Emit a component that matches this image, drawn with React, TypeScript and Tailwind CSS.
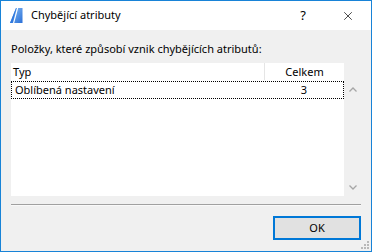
import { X } from 'lucide-react'

const font = { fontFamily: '"Noto Sans", "Open Sans", sans-serif' }

function AppIcon() {
  return (
    <svg width="13" height="16" viewBox="0 0 13 16" aria-hidden>
      <defs>
        <linearGradient id="ac" x1="0" y1="0" x2="1" y2="1">
          <stop offset="0" stopColor="#8cc0f4" />
          <stop offset="1" stopColor="#2a70d8" />
        </linearGradient>
      </defs>
      <polygon points="0,15 6,0 12.5,0 12.5,15" fill="url(#ac)" />
      <polygon points="0,15 6,0 6.5,0 2.5,15" fill="#2f78de" />
      <polygon points="3,15 7,0 8.2,0 4.2,15" fill="#ffffff" />
    </svg>
  )
}

function Chevron({ up }: { up?: boolean }) {
  return (
    <svg width="8" height="5" viewBox="0 0 8 5" aria-hidden>
      <polyline
        points={up ? '0.5,4.5 4,1 7.5,4.5' : '0.5,0.5 4,4 7.5,0.5'}
        fill="none"
        stroke="#a6a6a6"
        strokeWidth="1.3"
      />
    </svg>
  )
}

export default function App() {
  return (
    <div
      className="relative w-[372px] h-[252px] border border-[#1883d7] bg-[#f0f0f0] flex flex-col text-[11px] text-black"
      style={font}
    >
      {/* title bar */}
      <div className="h-[29px] bg-white flex items-center shrink-0">
        <div className="ml-[9px] mt-[1px]">
          <AppIcon />
        </div>
        <span className="ml-[8px] text-[11px]">Chybějící atributy</span>
        <span className="ml-auto mr-[35px] text-[13px]">?</span>
        <X className="mr-[16px]" size={14} strokeWidth={1.2} />
      </div>

      {/* body */}
      <div className="flex-1 flex flex-col px-[10px] pt-[11px]">
        <p className="leading-[16px]">Položky, které způsobí vznik chybějících atributů:</p>

        <div className="mt-[6px] h-[133px] flex">
          <div className="flex-1 bg-white flex flex-col">
            <div className="h-[17px] flex leading-[17px]">
              <div className="flex-1 pl-[2px] border-r border-[#e5e5e5]">Typ</div>
              <div className="w-[79px] text-center">Celkem</div>
            </div>
            <div className="mt-[1px] h-[18px] flex border border-dotted border-black leading-[16px]">
              <div className="flex-1 pl-[3px]">Oblíbená nastavení</div>
              <div className="w-[78px] text-center">3</div>
            </div>
          </div>
          <div className="w-[17px] flex flex-col">
            <div className="h-[18px]" />
            <div className="h-[17px] flex items-center justify-center">
              <Chevron up />
            </div>
            <div className="flex-1" />
            <div className="h-[17px] flex items-center justify-center">
              <Chevron />
            </div>
          </div>
        </div>

        <div className="mt-[8px] h-[1px] bg-[#a0a0a0]" />
        <div className="h-[1px] bg-white/60" />

        <div className="mt-[10px] flex justify-end">
          <button
            type="button"
            className="w-[88px] h-[24px] border-2 border-[#0078d7] bg-[#e1e1e1] text-[11px] leading-[20px]"
          >
            OK
          </button>
        </div>
      </div>

      {/* resize grip */}
      <svg className="absolute right-[2px] bottom-[2px]" width="8" height="8" viewBox="0 0 8 8" aria-hidden>
        <rect x="6" y="0" width="2" height="2" fill="#b8b8b8" />
        <rect x="3" y="3" width="2" height="2" fill="#b8b8b8" />
        <rect x="6" y="3" width="2" height="2" fill="#b8b8b8" />
        <rect x="0" y="6" width="2" height="2" fill="#b8b8b8" />
        <rect x="3" y="6" width="2" height="2" fill="#b8b8b8" />
        <rect x="6" y="6" width="2" height="2" fill="#b8b8b8" />
      </svg>
    </div>
  )
}
